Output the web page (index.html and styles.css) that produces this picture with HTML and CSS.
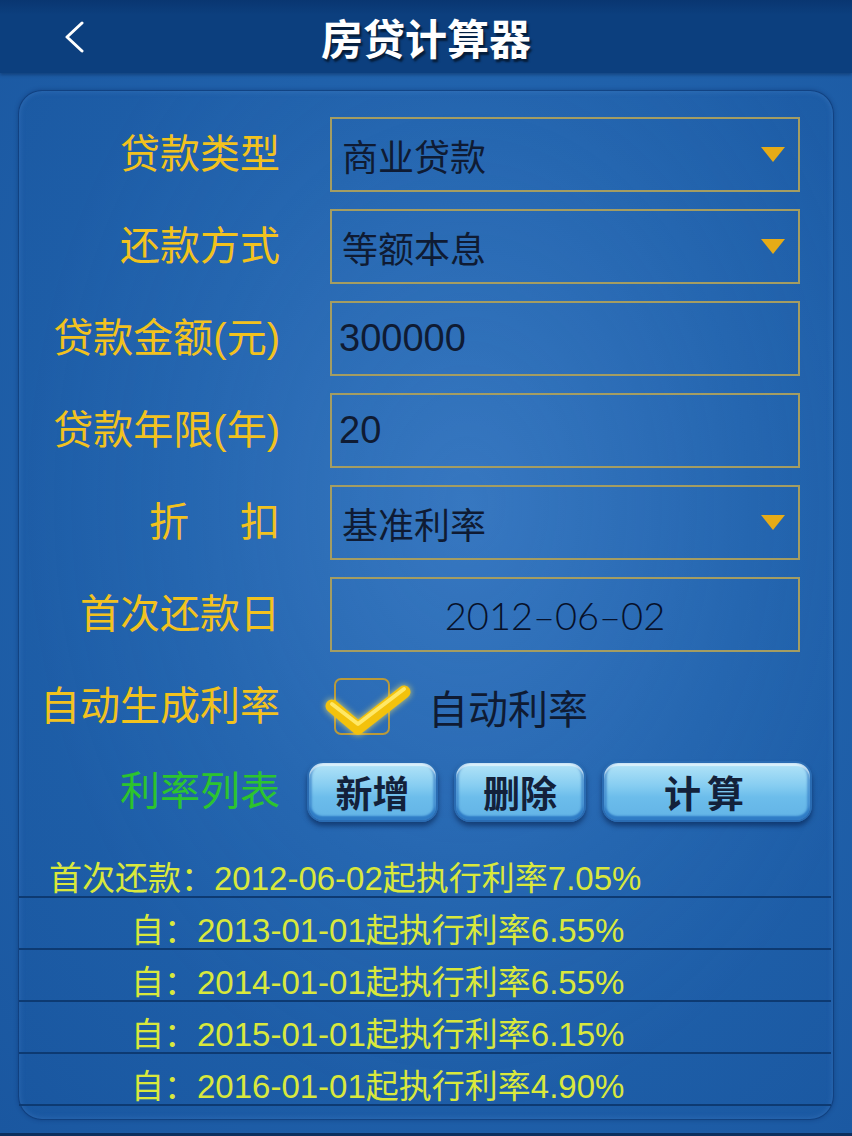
FILE: index.html
```html
<!DOCTYPE html>
<html lang="zh-CN">
<head>
  <meta charset="UTF-8">
  <meta name="viewport" content="width=device-width, initial-scale=1.0">
  <title>房贷计算器</title>
  <link rel="stylesheet" href="styles.css">
</head>
<body>
  <header class="topbar">
    <button class="back" type="button" aria-label="返回">
      <svg width="22" height="32" viewBox="0 0 22 32">
        <polyline points="19,2 4,16 19,30" fill="none" stroke="#fff" stroke-width="3" stroke-linecap="round" stroke-linejoin="round" />
      </svg>
    </button>
    <h1>房贷计算器</h1>
    <span></span>
  </header>

  <main class="panel">
    <!-- 表单区 -->
    <form class="calc" id="calcForm">
      <label class="lbl">贷款类型</label>
      <div class="field select">商业贷款<span class="caret"></span></div>

      <label class="lbl">还款方式</label>
      <div class="field select">等额本息<span class="caret"></span></div>

      <label class="lbl">贷款金额(元)</label>
      <div class="field num">300000</div>

      <label class="lbl">贷款年限(年)</label>
      <div class="field num">20</div>

      <label class="lbl">折　 扣</label>
      <div class="field select">基准利率<span class="caret"></span></div>

      <label class="lbl">首次还款日</label>
      <div class="field date">2012–06–02</div>

      <label class="lbl">自动生成利率</label>
      <div class="check-wrap">
        <span class="checkbox">
          <svg class="tick" width="90" height="66" viewBox="0 0 90 66">
            <polyline points="8,30 34,52 80,16" fill="none" stroke="#f3c20c" stroke-width="13" stroke-linecap="round" stroke-linejoin="round" />
            <polyline points="8,28 34,48 80,13" fill="none" stroke="#ffe866" stroke-width="4" stroke-linecap="round" stroke-linejoin="round" />
          </svg>
        </span>
        <span class="check-text">自动利率</span>
      </div>

      <div class="actions-row">
        <label class="lbl green">利率列表</label>
        <div class="actions">
          <button type="button" class="btn btn-add">新增</button>
          <button type="button" class="btn btn-del">删除</button>
          <button type="button" class="btn btn-calc">计算</button>
        </div>
      </div>
    </form>

    <!-- 利率列表 -->
    <ul class="rates">
      <li class="first">首次还款：2012-06-02起执行利率7.05%</li>
      <li>自：2013-01-01起执行利率6.55%</li>
      <li>自：2014-01-01起执行利率6.55%</li>
      <li>自：2015-01-01起执行利率6.15%</li>
      <li>自：2016-01-01起执行利率4.90%</li>
    </ul>
  </main>
</body>
</html>
```

FILE: styles.css
```css
body {
  margin: 0;
  height: 1136px;
  overflow: hidden;
  font-family: "Liberation Sans", "Noto Sans CJK SC", sans-serif;
  background: radial-gradient(ellipse at 55% 45%, #2f71bb 0%, #2163ad 45%, #1a57a0 100%);
  border-bottom: 3px solid #0b2f5e;
  box-sizing: border-box;
}

/* 顶部导航 */
.topbar {
  height: 73px;
  display: grid;
  grid-template-columns: 1fr auto 1fr;
  align-items: center;
  background: linear-gradient(#093671, #0c3f7e 20%, #0c3f7e);
  box-shadow: 0 2px 3px rgba(5, 30, 70, 0.4);
}

.back {
  justify-self: start;
  margin-left: 63px;
  padding: 0;
  border: none;
  background: none;
  display: flex;
}

.topbar h1 {
  margin: 0;
  font-family: "Noto Sans CJK SC", sans-serif;
  font-size: 42px;
  font-weight: 700;
  color: #fff;
  text-shadow: 2px 3px 2px rgba(0, 0, 0, 0.55);
  line-height: 70px;
}

/* 内容面板 */
.panel {
  margin: 17px 18px 0 18px;
  height: 1030px;
  box-sizing: border-box;
  border: 1px solid rgba(10, 45, 100, 0.55);
  border-radius: 24px;
  background: radial-gradient(ellipse at 55% 40%, rgba(80, 140, 210, 0.25), rgba(20, 80, 160, 0.05) 70%);
  box-shadow: inset 0 0 6px rgba(120, 170, 230, 0.25), 0 0 4px rgba(5, 30, 80, 0.35);
  padding-top: 26px;
}

.calc {
  display: grid;
  grid-template-columns: 261px 470px;
  grid-template-rows: repeat(7, 75px) 61px;
  column-gap: 50px;
  row-gap: 17px;
  align-items: center;
}

.lbl {
  justify-self: end;
  font-family: "Liberation Sans", "Noto Sans CJK SC", sans-serif;
  font-size: 40px;
  line-height: 1.2;
  color: #f2c21e;
  white-space: pre;
  margin-top: -1px;
}

.green {
  color: #2cc42e;
}

.field {
  height: 75px;
  box-sizing: border-box;
  border: 2px solid #a49d62;
  display: flex;
  align-items: center;
  padding: 0 13px 0 10px;
  font-size: 36px;
  color: #0f1b33;
  font-family: "Liberation Sans", "Noto Sans CJK SC", sans-serif;
}

.field.num {
  font-size: 38px;
  padding-left: 7px;
}

.select {
  justify-content: space-between;
}

.caret {
  width: 0;
  height: 0;
  border-left: 12px solid transparent;
  border-right: 12px solid transparent;
  border-top: 15px solid #e6ab17;
}

.date {
  justify-content: center;
  padding-right: 30px;
  font-family: Lato, "Liberation Sans", sans-serif;
  font-weight: 300;
  font-size: 38px;
  color: #07112a;
}

/* 自动利率勾选 */
.check-wrap {
  display: flex;
  align-items: center;
  padding-left: 4px;
}

.checkbox {
  position: relative;
  width: 56px;
  height: 57px;
  box-sizing: border-box;
  border: 2px solid #b99a3a;
  border-radius: 7px;
}

.tick {
  position: absolute;
  left: -12px;
  top: -4px;
  filter: drop-shadow(0 0 3px rgba(255, 230, 90, 0.8));
}

.check-text {
  margin-left: 38px;
  font-family: "Noto Sans CJK SC", sans-serif;
  font-size: 40px;
  color: #0f1b33;
}

/* 按钮行 */
.actions-row {
  grid-column: 1 / -1;
  display: flex;
  align-items: center;
  height: 61px;
}

.actions-row .lbl {
  flex: 0 0 261px;
  text-align: right;
}

.actions {
  display: flex;
  flex-shrink: 0;
  gap: 16px;
  margin-left: 27px;
}

.btn {
  flex-shrink: 0;
  height: 61px;
  border: 2px solid #2a6cb3;
  border-radius: 16px;
  background: linear-gradient(#b3e4f8 0%, #86cdf1 40%, #6cbdeb 60%, #62b3e6 100%);
  box-shadow: inset 0 3px 1px rgba(255, 255, 255, 0.55), inset 0 -4px 2px #2f7cc6, inset 3px 0 2px rgba(40, 110, 190, 0.5), inset -3px 0 2px rgba(40, 110, 190, 0.5), 0 4px 5px rgba(0, 20, 60, 0.5);
  font-family: "Noto Sans CJK SC", sans-serif;
  font-weight: 700;
  font-size: 37px;
  color: #13213a;
  cursor: pointer;
  padding: 0;
}

.btn-add { width: 131px; }
.btn-del { width: 132px; }
.btn-calc { width: 210px; letter-spacing: 6px; }

/* 利率列表 */
.rates {
  list-style: none;
  margin: 24px 2px 0 0;
  padding: 0;
}

.rates li {
  height: 52px;
  box-sizing: border-box;
  padding: 18px 0 0 112px;
  line-height: 30px;
  border-bottom: 2px solid #0d3a72;
  font-size: 33px;
  color: #d9e83c;
  font-family: "Liberation Sans", "Noto Sans CJK SC", sans-serif;
}

.rates li.first {
  padding-left: 30px;
}
```
